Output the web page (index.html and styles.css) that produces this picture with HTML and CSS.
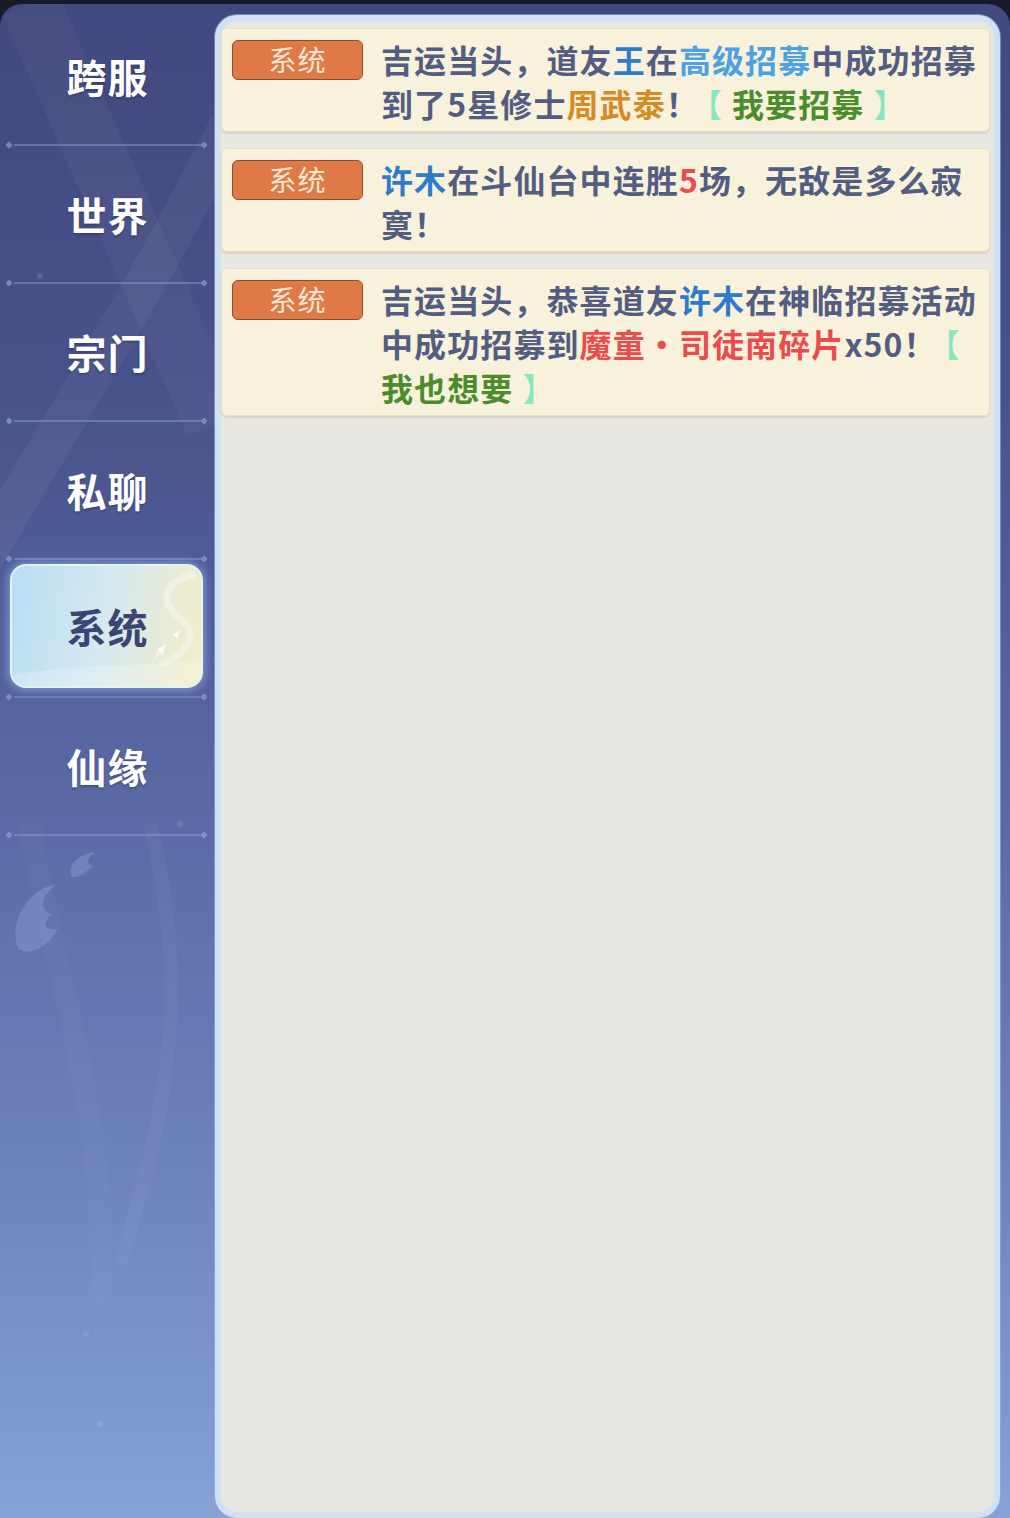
FILE: index.html
```html
<!DOCTYPE html>
<html lang="zh-CN">
<head>
<meta charset="utf-8">
<title>聊天 - 系统</title>
<link rel="stylesheet" href="styles.css">
</head>
<body>
<div class="frame">
  <svg class="frame-deco" width="215" height="1514" viewBox="0 0 215 1514">
    <path d="M-20 560 C 60 420, 140 300, 230 120" stroke="rgba(255,255,255,0.045)" stroke-width="40" fill="none"/>
    <path d="M30 0 L 215 420" stroke="rgba(255,255,255,0.035)" stroke-width="60" fill="none"/>
    <path d="M150 820 C 190 980, 170 1100, 120 1260" stroke="rgba(255,255,255,0.035)" stroke-width="14" fill="none"/>
    <path d="M30 820 C 60 1000, 110 1120, 100 1300" stroke="rgba(255,255,255,0.025)" stroke-width="22" fill="none"/>
    <path d="M18 945 C 8 915, 30 885, 56 880 C 40 895, 38 905, 52 910 C 42 918, 44 928, 58 925 C 46 945, 30 952, 18 945 Z" fill="rgba(160,180,235,0.3)"/>
    <path d="M72 873 C 66 862, 78 850, 95 848 C 86 856, 86 860, 93 862 C 86 868, 80 874, 72 873 Z" fill="rgba(160,180,235,0.3)"/>
    <circle cx="40" cy="272" r="3" fill="rgba(255,255,255,0.12)"/>
    <circle cx="180" cy="820" r="3" fill="rgba(255,255,255,0.12)"/>
    <circle cx="86" cy="1330" r="3" fill="rgba(255,255,255,0.1)"/>
    <circle cx="100" cy="1420" r="3" fill="rgba(255,255,255,0.1)"/>
  </svg>

  <nav class="sidebar">
    <div class="tab"><span class="tab-label">跨服</span></div>
    <div class="tab"><span class="tab-label">世界</span></div>
    <div class="tab"><span class="tab-label">宗门</span></div>
    <div class="tab"><span class="tab-label">私聊</span></div>
    <div class="tab tab-active">
      <div class="tab-box">
        <svg class="tab-box-deco" width="193" height="124" viewBox="0 0 193 124">
          <path d="M0 112 C 50 100, 120 104, 193 96 L193 124 L0 124 Z" fill="rgba(255,255,255,0.22)"/>
          <path d="M186 10 C 150 18, 150 40, 172 56 C 190 70, 176 92, 150 100" stroke="rgba(255,255,255,0.35)" stroke-width="7" fill="none"/>
          <path d="M140 100 L 150 86 L 146 86 L 156 80 L 152 92 L 150 88 Z" fill="rgba(255,255,255,0.85)"/>
          <path d="M158 80 L 165 71 L 162 71 L 170 66 L 167 75 L 165 72 Z" fill="rgba(255,255,255,0.85)"/>
        </svg>
        <span class="tab-label">系统</span>
      </div>
    </div>
    <div class="tab"><span class="tab-label">仙缘</span></div>
  </nav>

  <main class="panel">
    <div class="msg">
      <span class="badge">系统</span>
      <p class="msg-text">吉运当头，道友<span class="c-blue">王</span>在<span class="c-sky">高级招募</span>中成功招募到了5星修士<span class="c-gold">周武泰</span>！<span class="c-bracket br-open">【</span><span class="c-green">我要招募</span><span class="c-bracket br-close">】</span></p>
    </div>
    <div class="msg">
      <span class="badge">系统</span>
      <p class="msg-text"><span class="c-blue">许木</span>在斗仙台中连胜<span class="c-red">5</span>场，无敌是多么寂寞！</p>
    </div>
    <div class="msg">
      <span class="badge">系统</span>
      <p class="msg-text">吉运当头，恭喜道友<span class="c-blue">许木</span>在神临招募活动中成功招募到<span class="c-red">魔童・司徒南碎片</span>x50！<span class="c-bracket br-open">【</span><br><span class="c-green">我也想要</span><span class="c-bracket br-close">】</span></p>
    </div>
  </main>
</div>
</body>
</html>
```

FILE: styles.css
```css
html, body {
  margin: 0;
  padding: 0;
}

body {
  background: #171a2b;
  width: 1010px;
  height: 1518px;
  overflow: hidden;
  font-family: "Noto Sans CJK SC", "Noto Sans", sans-serif;
}

.frame {
  position: relative;
  margin-top: 4px;
  height: 1514px;
  display: flex;
  border-radius: 22px 22px 0 0;
  background: linear-gradient(180deg, #424880 0%, #48528a 25%, #5866a2 50%, #6c80ba 75%, #86a2d6 100%);
  overflow: hidden;
}

.frame-deco {
  position: absolute;
  left: 0;
  top: 0;
  pointer-events: none;
}

.sidebar {
  position: relative;
  width: 215px;
  flex: none;
  padding-top: 4px;
  display: flex;
  flex-direction: column;
}

.tab {
  position: relative;
  height: 138px;
  display: flex;
  align-items: center;
  justify-content: center;
  padding-bottom: 2px;
  box-sizing: border-box;
}

.tab::after {
  content: "";
  position: absolute;
  left: 14px;
  right: 14px;
  bottom: 0;
  height: 2px;
  background: rgba(140, 162, 220, 0.45);
}

.tab::before {
  content: "";
  position: absolute;
  left: 6px;
  right: 8px;
  bottom: -2px;
  height: 6px;
  background:
    radial-gradient(circle at 3px 3px, rgba(150, 170, 225, 0.6) 2.5px, transparent 3px) left center / 6px 6px no-repeat,
    radial-gradient(circle at 3px 3px, rgba(150, 170, 225, 0.6) 2.5px, transparent 3px) right center / 6px 6px no-repeat;
}

.tab-label {
  position: relative;
  font-size: 40px;
  font-weight: 700;
  color: #ffffff;
  letter-spacing: 1px;
  text-shadow: 0 2px 2px rgba(30, 36, 80, 0.35);
  line-height: 1;
}

.tab-active {
  align-items: flex-start;
  justify-content: flex-start;
  padding: 4px 12px 6px 10px;
}

.tab-box {
  position: relative;
  width: 193px;
  height: 124px;
  box-sizing: border-box;
  border-radius: 16px;
  border: 2px solid #dff7ee;
  background: linear-gradient(100deg, #b9ddf4 0%, #d6e9ee 50%, #f4ecc6 100%);
  box-shadow: 0 0 8px 2px rgba(160, 200, 255, 0.55);
  display: flex;
  align-items: center;
  justify-content: center;
  overflow: hidden;
}

.tab-box-deco {
  position: absolute;
  left: -2px;
  top: -2px;
}

.tab-box .tab-label {
  color: #3b4573;
  text-shadow: none;
  margin-left: 2px;
}

.panel {
  width: 785px;
  height: 1503px;
  margin-top: 11px;
  flex: none;
  box-sizing: border-box;
  border: 6px solid #cfe1f4;
  border-radius: 22px;
  background: #e8e7e2;
  box-shadow: 0 0 0 1px rgba(150, 175, 220, 0.6);
  padding: 7px 4px 0 0;
  display: flex;
  flex-direction: column;
  gap: 16px;
}

.msg {
  display: flex;
  align-items: flex-start;
  gap: 19px;
  background: #f8f1dc;
  border: 1px solid #e9dfc4;
  border-radius: 6px;
  box-shadow: 0 2px 1px rgba(190, 180, 150, 0.35);
  padding: 8px 5px 6px 10px;
}

.badge {
  flex: none;
  width: 131px;
  height: 40px;
  margin-top: 3px;
  box-sizing: border-box;
  background: #df7946;
  border: 1.5px solid #8e4b33;
  border-radius: 6px;
  color: #fde6d6;
  font-size: 28px;
  font-weight: 400;
  line-height: 36px;
  text-align: center;
  letter-spacing: 1px;
}

.msg-text {
  flex: 1;
  margin: 0 0 0 -1px;
  font-size: 32px;
  font-weight: 700;
  letter-spacing: 1.1px;
  line-height: 44px;
  color: #535d81;
}

.c-blue { color: #2e7cc9; }
.c-sky { color: #4ba1e2; }
.c-gold { color: #d58b24; }
.c-red { color: #ec4a4c; }
.c-green { color: #4b8c2b; }
.c-bracket { color: #86e6bd; font-weight: 400; }
.br-open { margin-left: -9px; margin-right: 9px; }
.br-close { margin-left: 9px; }
```
